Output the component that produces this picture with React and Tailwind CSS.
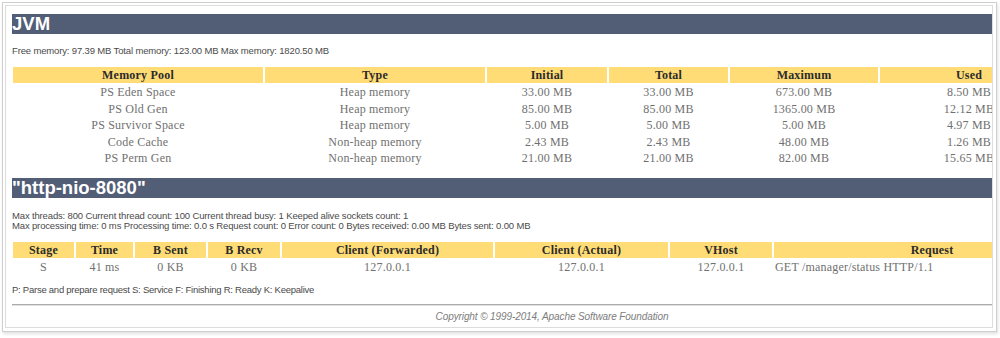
const memoryPools = [
  ['PS Eden Space', 'Heap memory', '33.00 MB', '33.00 MB', '673.00 MB', '8.50 MB'],
  ['PS Old Gen', 'Heap memory', '85.00 MB', '85.00 MB', '1365.00 MB', '12.12 MB'],
  ['PS Survivor Space', 'Heap memory', '5.00 MB', '5.00 MB', '5.00 MB', '4.97 MB'],
  ['Code Cache', 'Non-heap memory', '2.43 MB', '2.43 MB', '48.00 MB', '1.26 MB'],
  ['PS Perm Gen', 'Non-heap memory', '21.00 MB', '21.00 MB', '82.00 MB', '15.65 MB'],
]

const memoryHeads = ['Memory Pool', 'Type', 'Initial', 'Total', 'Maximum', 'Used']

const threadHeads = [
  'Stage',
  'Time',
  'B Sent',
  'B Recv',
  'Client (Forwarded)',
  'Client (Actual)',
  'VHost',
  'Request',
]

const threadRow = [
  'S',
  '41 ms',
  '0 KB',
  '0 KB',
  '127.0.0.1',
  '127.0.0.1',
  '127.0.0.1',
  'GET /manager/status HTTP/1.1',
]

const sans = "font-['Liberation_Sans',Arial,sans-serif]"
const cellFont = "font-['Liberation_Serif','Times_New_Roman',serif] text-[12px] tracking-[0.2px]"

function SectionBar({ children }) {
  return (
    <div className={`h-[20px] bg-[#525d76] text-[18.5px] font-bold leading-[20px] text-white ${sans}`}>
      {children}
    </div>
  )
}

function Info({ children, className = '' }) {
  return (
    <p className={`text-[9.5px] text-[#4a4a4a] ${sans} ${className}`}>
      {children}
    </p>
  )
}

export default function App() {
  return (
    <div className="h-[338px] w-[1000px] overflow-hidden bg-white pl-[2px] pt-[2px]">
      <div className="h-[330px] w-[995px] border border-[#cfcfcf] p-[2px] shadow-[1px_2px_3px_rgba(0,0,0,0.12)]">
        <div className="h-[323px] w-[988px] overflow-hidden border border-[#dcdcdc] bg-white">
          <div className="ml-[6px] w-[1080px] pt-[8px]">
            <SectionBar>JVM</SectionBar>
            <Info className="mt-[11px] leading-[12px] tracking-[-0.15px]">
              Free memory: 97.39 MB Total memory: 123.00 MB Max memory: 1820.50 MB
            </Info>

            <div className={`mt-[10px] pl-[1px] ${cellFont}`}>
              <div className="grid h-[15px] grid-cols-[250px_220px_120px_119px_148px_178px] gap-x-[2px]">
                {memoryHeads.map((h) => (
                  <div key={h} className="bg-[#ffdc75] pt-[1px] text-center font-bold leading-[15px] text-[#2b2b2b]">
                    {h}
                  </div>
                ))}
              </div>
              <div className="mt-[1px]">
                {memoryPools.map((row) => (
                  <div
                    key={row[0]}
                    className="grid h-[16.6px] grid-cols-[250px_220px_120px_119px_148px_178px] gap-x-[2px] pt-[1px] leading-[16.6px] text-[#707070]"
                  >
                    {row.map((cell, i) => (
                      <div key={i} className="text-center whitespace-nowrap">
                        {cell}
                      </div>
                    ))}
                  </div>
                ))}
              </div>
            </div>

            <div className="mt-[12px]">
              <SectionBar>"http-nio-8080"</SectionBar>
            </div>
            <Info className="mt-[13px] leading-[10px] tracking-[-0.15px]">
              Max threads: 800 Current thread count: 100 Current thread busy: 1 Keeped alive sockets count: 1
            </Info>
            <Info className="leading-[10px] tracking-[-0.15px]">
              Max processing time: 0 ms Processing time: 0.0 s Request count: 0 Error count: 0 Bytes received: 0.00 MB Bytes sent: 0.00 MB
            </Info>

            <div className={`mt-[11px] pl-[1px] ${cellFont}`}>
              <div className="grid h-[15px] grid-cols-[61px_57px_71px_72px_211px_173px_102px_316px] gap-x-[2px]">
                {threadHeads.map((h) => (
                  <div key={h} className="bg-[#ffdc75] pt-[1px] text-center font-bold leading-[15px] text-[#2b2b2b]">
                    {h}
                  </div>
                ))}
              </div>
              <div className="mt-[1px] grid h-[16.6px] grid-cols-[61px_57px_71px_72px_211px_173px_102px_316px] gap-x-[2px] pt-[1px] leading-[16.6px] text-[#707070]">
                {threadRow.map((cell, i) => (
                  <div key={i} className={i === 7 ? 'pl-[1px] text-left whitespace-nowrap' : 'text-center whitespace-nowrap'}>
                    {cell}
                  </div>
                ))}
              </div>
            </div>

            <Info className="mt-[9px] leading-[12px] tracking-[-0.25px]">
              P: Parse and prepare request S: Service F: Finishing R: Ready K: Keepalive
            </Info>

            <div className="mt-[8px] border-t border-b border-t-[#ababab] border-b-[#e2e2e2]" />

            <p className={`mt-[5px] text-center text-[10px] italic leading-[12px] tracking-[-0.1px] text-[#7d7d7d] ${sans}`}>
              Copyright &copy; 1999-2014, Apache Software Foundation
            </p>
          </div>
        </div>
      </div>
    </div>
  )
}
